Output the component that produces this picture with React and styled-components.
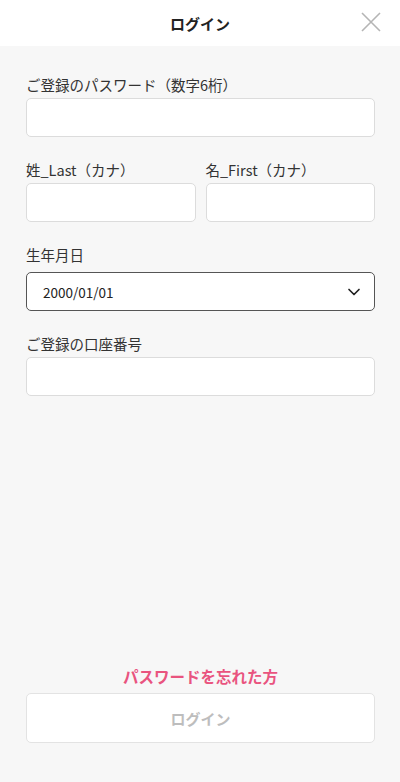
import React from "react";
import styled, { createGlobalStyle } from "styled-components";

const GlobalStyle = createGlobalStyle`
  html, body {
    margin: 0;
    padding: 0;
    background: #f7f7f7;
    font-family: "Noto Sans CJK JP", "Noto Sans", sans-serif;
    color: #333;
  }
  * { box-sizing: border-box; }
`;

function CloseIcon() {
  return (
    <svg width="20" height="20" viewBox="0 0 20 20">
      <path d="M1 1 L19 19 M19 1 L1 19" stroke="#b5b5b5" strokeWidth="1.6" fill="none" />
    </svg>
  );
}

function Chevron() {
  return (
    <svg width="14" height="14" viewBox="0 0 14 14">
      <path d="M2 4.5 L7 9.5 L12 4.5" stroke="#222" strokeWidth="1.7" fill="none" strokeLinecap="round" strokeLinejoin="round" />
    </svg>
  );
}

export default function App() {
  return (
    <>
      <GlobalStyle />
      <Page>
        <Header>
          <Title>ログイン</Title>
          <CloseButton>
            <CloseIcon />
          </CloseButton>
        </Header>
        <Form>
          <Field>
            <Label>ご登録のパスワード（数字6桁）</Label>
            <Input />
          </Field>
          <Row>
            <Field>
              <Label>姓_Last（カナ）</Label>
              <Input />
            </Field>
            <Field>
              <Label>名_First（カナ）</Label>
              <Input />
            </Field>
          </Row>
          <Field>
            <Label>生年月日</Label>
            <Select>
              <span>2000/01/01</span>
              <Chevron />
            </Select>
          </Field>
          <Field>
            <Label>ご登録の口座番号</Label>
            <Input />
          </Field>
        </Form>
        <Footer>
          <ForgotLink href="#">パスワードを忘れた方</ForgotLink>
          <LoginButton>ログイン</LoginButton>
        </Footer>
      </Page>
    </>
  );
}

const Page = styled.div`
  width: 400px;
  min-height: 782px;
  display: flex;
  flex-direction: column;
  background: #f7f7f7;
`;

const Header = styled.div`
  height: 46px;
  background: #fff;
  display: flex;
  align-items: center;
  justify-content: center;
  position: relative;
`;

const Title = styled.h1`
  margin: 0;
  font-size: 15px;
  font-weight: 700;
  color: #222;
`;

const CloseButton = styled.div`
  position: absolute;
  right: 19px;
  top: 12px;
  width: 20px;
  height: 20px;
  display: flex;
`;

const Form = styled.div`
  flex: 1;
  display: flex;
  flex-direction: column;
  gap: 23px;
  padding: 29px 25px 0 26px;
`;

const Row = styled.div`
  display: grid;
  grid-template-columns: 1fr 1fr;
  gap: 10px;
`;

const Field = styled.div`
  display: flex;
  flex-direction: column;
`;

const Label = styled.label`
  font-size: 14.5px;
  line-height: 20px;
  color: #333;
  margin-bottom: 3px;
`;

const Input = styled.input`
  height: 39px;
  border: 1px solid #dcdcdc;
  border-radius: 5px;
  background: #fff;
  outline: none;
  width: 100%;
`;

const Select = styled.div`
  height: 39px;
  margin-top: 4px;
  border: 1px solid #555;
  border-radius: 5px;
  background: #fff;
  display: flex;
  align-items: center;
  justify-content: space-between;
  padding: 0 13px 0 16px;
  font-size: 13.5px;
  color: #222;
`;

const Footer = styled.div`
  display: flex;
  flex-direction: column;
  align-items: center;
  padding: 0 25px 39px 26px;
`;

const ForgotLink = styled.a`
  font-size: 15.5px;
  font-weight: 700;
  color: #e9547f;
  text-decoration: none;
  line-height: 20px;
  margin-bottom: 7px;
`;

const LoginButton = styled.button`
  width: 100%;
  height: 50px;
  background: #fff;
  border: 1px solid #e3e3e3;
  border-radius: 5px;
  font-family: inherit;
  font-size: 15px;
  font-weight: 700;
  color: #bdbdbd;
`;
